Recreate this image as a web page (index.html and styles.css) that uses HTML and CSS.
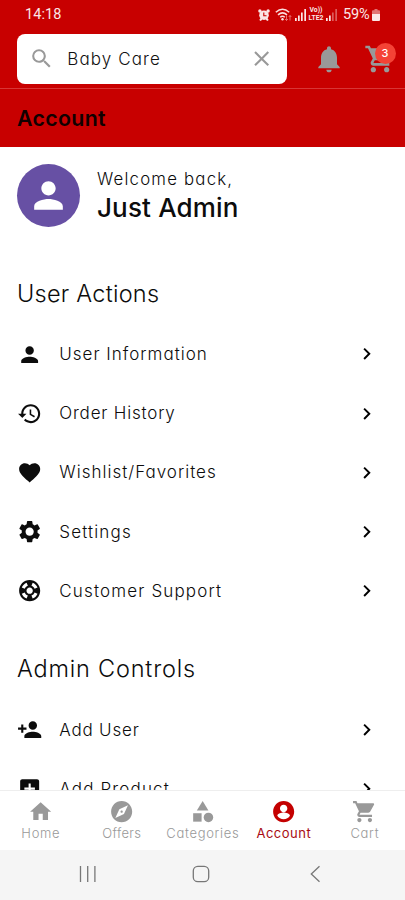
FILE: index.html
```html
<!DOCTYPE html>
<html lang="en">
<head>
<meta charset="utf-8">
<meta name="viewport" content="width=device-width, initial-scale=1">
<title>Account</title>
<link rel="stylesheet" href="styles.css">
</head>
<body>
<div class="screen">
  <header class="header">
    <div class="status">
      <span class="time">14:18</span>
      <div class="status-icons">
        <svg class="s-alarm" viewBox="0 0 12 12"><circle cx="6" cy="6.200" r="4.800"/><circle cx="1.900" cy="2" r="1.700"/><circle cx="10.100" cy="2" r="1.700"/><path d="m2.500 9 2 1.500L2.700 12 1.300 11zM9.500 9l-2 1.500L9.300 12l1.400-1z"/><path d="M5.800 3.500v3.200h2.700" fill="none" stroke="#c80000" stroke-width="1.100"/></svg>
        <svg class="s-wifi" viewBox="0 0 17 13"><g fill="none" stroke="#fbdede" stroke-width="1.500"><path d="M.8 4.300Q7.500-1.900 14.200 4.300M3 6.900q4.500-4 9 0M5.200 9.300q2.300-2 4.600 0"/></g><circle cx="7.500" cy="11.200" r="1.200"/><path d="M11.500 7.500v5M10 11l1.500 1.500L13 11M15 12.500v-5M13.700 9 15 7.500 16.300 9" fill="none" stroke="#ef8585" stroke-width=".8"/></svg>
        <svg class="s-signal" viewBox="0 0 12 12"><path d="M0 9h1.700v3H0zM3 6.500h1.700V12H3zM6 3.500h1.700V12H6zM9.300 0H11v12H9.300z"/></svg>
        <span class="lte"><span>Vo))</span><span>LTE2</span></span>
        <svg class="s-signal" viewBox="0 0 12 12"><path d="M0 9h1.700v3H0zM3 6.500h1.700V12H3z"/><path opacity=".4" d="M6 3.500h1.700V12H6zM9.300 0H11v12H9.300z"/></svg>
        <span class="percent">59%</span>
        <svg class="s-battery" viewBox="0 0 8 12"><path opacity=".5" d="M2.500 0h3v1.200H7q1 0 1 1V5H0V2.200q0-1 1-1h1.500z"/><path d="M0 5h8v6q0 1-1 1H1q-1 0-1-1z"/></svg>
      </div>
    </div>
    <div class="toolbar">
      <div class="search">
        <svg class="icon" viewBox="0 0 24 24"><path d="M15.500 14h-.79l-.28-.27A6.471 6.471 0 0 0 16 9.500 6.500 6.500 0 1 0 9.500 16c1.610 0 3.090-.59 4.230-1.570l.27.28v.79l5 4.990L20.490 19l-4.990-5zm-6 0C7.010 14 5 11.990 5 9.500S7.010 5 9.500 5 14 7.010 14 9.500 11.990 14 9.500 14z"/></svg>
        <span class="query">Baby Care</span>
        <svg class="icon" viewBox="0 0 24 24"><path d="M19 6.410 17.590 5 12 10.590 6.410 5 5 6.410 10.590 12 5 17.590 6.410 19 12 13.410 17.590 19 19 17.590 13.410 12z"/></svg>
      </div>
      <svg class="bell" viewBox="0 0 24 24"><path d="M12 22c1.100 0 2-.9 2-2h-4c0 1.100.89 2 2 2zm6-6v-5c0-3.070-1.640-5.640-4.500-6.320V4c0-.83-.67-1.500-1.500-1.500s-1.500.67-1.500 1.500v.68C7.630 5.360 6 7.920 6 11v5l-2 2v1h16v-1l-2-2z"/></svg>
      <div class="cart">
        <svg viewBox="0 0 24 24"><path d="M7 18c-1.100 0-1.990.9-1.990 2S5.900 22 7 22s2-.9 2-2-.9-2-2-2zM1 2v2h2l3.600 7.590-1.350 2.450c-.16.28-.25.61-.25.96 0 1.100.9 2 2 2h12v-2H7.420c-.14 0-.25-.11-.25-.25l.03-.12.9-1.630h7.450c.75 0 1.410-.41 1.750-1.030l3.580-6.490c.08-.14.12-.31.12-.48 0-.55-.45-1-1-1H5.210l-.94-2H1zm16 16c-1.100 0-1.990.9-1.990 2s.89 2 1.990 2 2-.9 2-2-.9-2-2-2z"/></svg>
        <span class="badge">3</span>
      </div>
    </div>
    <h1 class="title">Account</h1>
  </header>

  <main class="content">
    <section class="profile">
      <div class="avatar"><svg viewBox="0 0 24 24"><path d="M12 12c2.210 0 4-1.790 4-4s-1.790-4-4-4-4 1.790-4 4 1.790 4 4 4zm0 2c-2.670 0-8 1.340-8 4v2h16v-2c0-2.660-5.330-4-8-4z"/></svg></div>
      <div class="greeting">
        <span class="welcome">Welcome back,</span>
        <span class="name">Just Admin</span>
      </div>
    </section>

    <h2 class="heading">User Actions</h2>
    <ul class="list">
      <li class="row"><svg class="icon" viewBox="0 0 24 24"><path d="M12 12c2.210 0 4-1.790 4-4s-1.790-4-4-4-4 1.790-4 4 1.790 4 4 4zm0 2c-2.670 0-8 1.340-8 4v2h16v-2c0-2.660-5.330-4-8-4z"/></svg><span class="label">User Information</span><svg class="chevron" viewBox="0 0 24 24"><path d="M10 6 8.590 7.410 13.170 12l-4.580 4.590L10 18l6-6z"/></svg></li>
      <li class="row"><svg class="icon" viewBox="0 0 24 24"><path d="M13 3c-4.970 0-9 4.030-9 9H1l3.890 3.890.07.14L9 12H6c0-3.870 3.130-7 7-7s7 3.130 7 7-3.130 7-7 7c-1.930 0-3.680-.79-4.940-2.060l-1.420 1.420C8.270 19.990 10.510 21 13 21c4.970 0 9-4.030 9-9s-4.030-9-9-9zm-1 5v5l4.280 2.540.72-1.210-3.500-2.080V8H12z"/></svg><span class="label order">Order History</span><svg class="chevron" viewBox="0 0 24 24"><path d="M10 6 8.590 7.410 13.170 12l-4.580 4.590L10 18l6-6z"/></svg></li>
      <li class="row"><svg class="icon" viewBox="0 0 24 24"><path d="m12 21.350-1.450-1.320C5.400 15.360 2 12.280 2 8.500 2 5.420 4.420 3 7.500 3c1.740 0 3.410.81 4.500 2.090C13.090 3.810 14.760 3 16.500 3 19.580 3 22 5.420 22 8.500c0 3.780-3.400 6.860-8.550 11.540L12 21.350z"/></svg><span class="label">Wishlist/Favorites</span><svg class="chevron" viewBox="0 0 24 24"><path d="M10 6 8.590 7.410 13.170 12l-4.580 4.590L10 18l6-6z"/></svg></li>
      <li class="row"><svg class="icon" viewBox="0 0 24 24"><path d="M19.440 12.990l.01-.02c.04-.32.06-.64.06-.97 0-.33-.03-.66-.07-.98l.02-.02 2.090-1.630c.19-.15.24-.42.12-.64l-2-3.460c-.12-.22-.39-.3-.61-.22l-2.490 1c-.52-.4-1.080-.73-1.690-.98l-.38-2.650C14.460 2.180 14.250 2 14 2h-4c-.25 0-.46.18-.49.42l-.38 2.650c-.61.25-1.170.59-1.690.98l-2.490-1c-.23-.09-.49 0-.61.22l-2 3.460c-.13.22-.07.49.12.64l2.110 1.650c-.04.32-.07.65-.07.98s.03.66.07.98l-2.110 1.650c-.19.15-.24.42-.12.64l2 3.460c.12.22.39.3.61.22l2.490-1c.52.4 1.080.73 1.690.98l.38 2.650c.03.24.24.42.49.42h4c.25 0 .46-.18.49-.42l.38-2.650c.61-.25 1.170-.59 1.690-.98l2.490 1c.23.09.49 0 .61-.22l2-3.460c.12-.22.07-.49-.12-.64l-2.100-1.640zM12 15.900c-2.150 0-3.900-1.750-3.900-3.900s1.750-3.900 3.900-3.900 3.900 1.750 3.900 3.900-1.750 3.900-3.900 3.900z"/></svg><span class="label wide">Settings</span><svg class="chevron" viewBox="0 0 24 24"><path d="M10 6 8.590 7.410 13.170 12l-4.580 4.590L10 18l6-6z"/></svg></li>
      <li class="row"><svg class="icon" viewBox="0 0 24 24"><path d="M12 2C6.480 2 2 6.480 2 12s4.480 10 10 10 10-4.480 10-10S17.520 2 12 2zm7.460 7.120-2.780 1.150c-.51-1.360-1.580-2.440-2.950-2.940l1.150-2.780c2.100.8 3.770 2.470 4.580 4.570zM12 15c-1.660 0-3-1.340-3-3s1.340-3 3-3 3 1.340 3 3-1.340 3-3 3zM9.130 4.540l1.170 2.780c-1.380.5-2.470 1.590-2.980 2.970L4.540 9.130c.81-2.110 2.480-3.780 4.590-4.590zM4.540 14.870l2.780-1.150c.51 1.380 1.590 2.460 2.970 2.960l-1.170 2.780c-2.100-.81-3.770-2.480-4.580-4.590zm10.340 4.590-1.150-2.780c1.370-.51 2.450-1.590 2.950-2.970l2.780 1.170c-.81 2.100-2.480 3.770-4.580 4.580z"/></svg><span class="label wide">Customer Support</span><svg class="chevron" viewBox="0 0 24 24"><path d="M10 6 8.590 7.410 13.170 12l-4.580 4.590L10 18l6-6z"/></svg></li>
    </ul>

    <h2 class="heading admin">Admin Controls</h2>
    <ul class="list">
      <li class="row"><svg class="icon" viewBox="0 0 24 24"><path d="M15 12c2.210 0 4-1.790 4-4s-1.790-4-4-4-4 1.790-4 4 1.790 4 4 4zm-9-2V7H4v3H1v2h3v3h2v-3h3v-2H6zm9 4c-2.670 0-8 1.340-8 4v2h16v-2c0-2.660-5.330-4-8-4z"/></svg><span class="label order">Add User</span><svg class="chevron" viewBox="0 0 24 24"><path d="M10 6 8.590 7.410 13.170 12l-4.580 4.590L10 18l6-6z"/></svg></li>
      <li class="row"><svg class="icon" viewBox="0 0 24 24"><path d="M19 3H5c-1.110 0-2 .9-2 2v14c0 1.100.89 2 2 2h14c1.100 0 2-.9 2-2V5c0-1.100-.9-2-2-2zm-2 10h-4v4h-2v-4H7v-2h4V7h2v4h4v2z"/></svg><span class="label wide">Add Product</span><svg class="chevron" viewBox="0 0 24 24"><path d="M10 6 8.590 7.410 13.170 12l-4.580 4.590L10 18l6-6z"/></svg></li>
    </ul>
  </main>

  <nav class="tabs">
    <div class="tab"><svg class="icon" viewBox="0 0 24 24"><path d="M10 20v-6h4v6h5v-8h3L12 3 2 12h3v8z"/></svg><span>Home</span></div>
    <div class="tab"><svg class="icon" viewBox="0 0 24 24"><path d="M12 10.900c-.61 0-1.100.49-1.100 1.100s.49 1.100 1.100 1.100c.61 0 1.100-.49 1.100-1.100s-.49-1.100-1.100-1.100zM12 2C6.480 2 2 6.480 2 12s4.480 10 10 10 10-4.480 10-10S17.520 2 12 2zm2.190 12.190L6 18l3.810-8.190L18 6l-3.810 8.190z"/></svg><span class="offers">Offers</span></div>
    <div class="tab"><svg class="icon" viewBox="0 0 24 24"><path d="m12 2-5.500 9h11z"/><circle cx="17.500" cy="17.500" r="4.500"/><path d="M3 13.500h8v8H3z"/></svg><span>Categories</span></div>
    <div class="tab active"><svg class="icon" viewBox="0 0 24 24"><path d="M12 2C6.480 2 2 6.480 2 12s4.480 10 10 10 10-4.480 10-10S17.520 2 12 2zm0 3.500c1.930 0 3.500 1.570 3.500 3.500s-1.570 3.500-3.500 3.500S8.500 10.930 8.500 9s1.570-3.500 3.500-3.500zm0 13.700c-2.500 0-4.710-1.280-6-3.220.03-1.990 4-3.080 6-3.080 1.990 0 5.970 1.090 6 3.080-1.290 1.940-3.500 3.220-6 3.220z"/></svg><span>Account</span></div>
    <div class="tab"><svg class="icon" viewBox="0 0 24 24"><path d="M7 18c-1.100 0-1.990.9-1.990 2S5.900 22 7 22s2-.9 2-2-.9-2-2-2zM1 2v2h2l3.600 7.590-1.350 2.450c-.16.28-.25.61-.25.96 0 1.100.9 2 2 2h12v-2H7.420c-.14 0-.25-.11-.25-.25l.03-.12.9-1.630h7.450c.75 0 1.410-.41 1.750-1.030l3.580-6.490c.08-.14.12-.31.12-.48 0-.55-.45-1-1-1H5.210l-.94-2H1zm16 16c-1.100 0-1.990.9-1.990 2s.89 2 1.990 2 2-.9 2-2-.9-2-2-2z"/></svg><span>Cart</span></div>
  </nav>

  <footer class="system">
    <svg viewBox="0 0 18 18"><path d="M1.500 1v16M8.700 1v16M15.900 1v16"/></svg>
    <svg viewBox="0 0 18 18"><rect x="1.300" y="1.300" width="15.400" height="15.400" rx="4.500"/></svg>
    <svg viewBox="0 0 18 18"><path d="M13.500 1.300 5.300 9l8.200 7.700"/></svg>
  </footer>
</div>
</body>
</html>
```
FILE: styles.css
```css
* { box-sizing: border-box; margin: 0; padding: 0; }
body { background: #fff; color: #0c0c0c; font-family: Inter, sans-serif; font-weight: 300; font-feature-settings: "cv11" 1, "calt" 0; }
svg { display: block; flex: none; }
ul { list-style: none; }
.screen { width: 405px; height: 900px; display: flex; flex-direction: column; overflow: hidden; }
.icon { width: 25.3px; height: 25.3px; fill: currentColor; }
.chevron { width: 23.5px; height: 23.5px; fill: #000; }

.header { flex: none; height: 147px; background: #c80000; display: flex; flex-direction: column; }
.status { height: 29px; padding: 0 25px; display: flex; align-items: center; justify-content: space-between; color: #fbe6e6; font-family: Roboto, sans-serif; font-weight: 400; }
.time { font-size: 14.500px; letter-spacing: .1px; }
.status-icons { display: flex; align-items: center; fill: #fbe6e6; }
.s-alarm { width: 12px; height: 12px; margin-right: 5px; }
.s-wifi { width: 17px; height: 13px; margin-right: 3px; }
.s-signal { width: 12px; height: 12px; }
.lte { display: flex; flex-direction: column; align-items: center; width: 16px; margin: 0 2px 0 1px; font-size: 6.800px; line-height: 7.500px; font-weight: 700; }
.percent { width: 27px; margin: 0 2px 0 5px; font-size: 14.500px; letter-spacing: -.1px; white-space: nowrap; }
.s-battery { width: 8px; height: 12px; }

.toolbar { height: 60px; padding: 5px 9px 4.500px 17px; display: flex; align-items: center; border-bottom: 1px solid #d83636; }
.search { width: 270px; height: 49.500px; margin-right: 26px; padding: 0 13px 0 12px; border-radius: 8px; background: #fff; display: flex; align-items: center; color: #999; }
.query { flex: 1; padding-left: 13px; color: #111; font-size: 17px; letter-spacing: 1.100px; }
.bell { width: 32px; height: 32px; fill: #999; margin-right: 19px; }
.cart { position: relative; width: 32px; height: 32px; }
.cart svg { width: 32px; height: 32px; fill: #999; }
.badge { position: absolute; left: 10.500px; top: 0; width: 21px; height: 21px; border-radius: 50%; background: #f44336; color: #fff; font: 500 11px/21px Inter, sans-serif; text-align: center; }
.title { flex: 1; padding-left: 17px; display: flex; align-items: center; font-size: 21.300px; font-weight: 600; letter-spacing: .350px; color: #100; }

.content { flex: 1; min-height: 0; overflow: hidden; padding: 17px 17px 0; }
.profile { display: flex; align-items: center; height: 63px; }
.avatar { width: 63px; height: 63px; border-radius: 50%; background: #6750a4; display: flex; align-items: center; justify-content: center; }
.avatar svg { width: 43px; height: 43px; fill: #fff; }
.greeting { padding-left: 17px; display: flex; flex-direction: column; align-items: flex-start; }
.welcome { font-size: 16.800px; line-height: 25px; letter-spacing: 1.200px; }
.name { font-size: 26px; line-height: 32px; font-weight: 500; letter-spacing: .150px; }
.heading { height: 34px; display: flex; align-items: center; font-size: 23.500px; font-weight: 300; letter-spacing: .250px; }
.heading.admin { letter-spacing: .8px; }
.profile + .heading { margin: 49px 0 14.700px; }
.list + .heading { margin: 31.500px 0 14.500px; }
.row { height: 59.100px; display: flex; align-items: center; padding-right: 9.500px; }
.label { margin: 0 auto 0 17px; font-size: 17px; letter-spacing: 1px; white-space: nowrap; }
.label.order { letter-spacing: .8px; }
.label.wide { letter-spacing: 1.150px; }

.tabs { flex: none; height: 60px; border-top: 1px solid #eee; background: #fff; display: grid; grid-template-columns: repeat(5, 1fr); color: #999; }
.tab { display: flex; flex-direction: column; align-items: center; padding-top: 7.500px; font-size: 13px; line-height: 19px; letter-spacing: .7px; }
.tab span { margin-right: -.7px; }
.tab .offers { letter-spacing: .350px; }
.tab.active { color: #a80b12; font-weight: 400; }
.tab.active span { letter-spacing: .5px; }
.tab.active svg { color: #c40000; }

.system { flex: none; height: 50px; padding: 0 81px 2px 78.500px; background: #f5f5f5; display: flex; align-items: center; justify-content: space-between; }
.system svg { width: 18px; height: 18px; fill: none; stroke: #777; stroke-width: 1.300; }
```
